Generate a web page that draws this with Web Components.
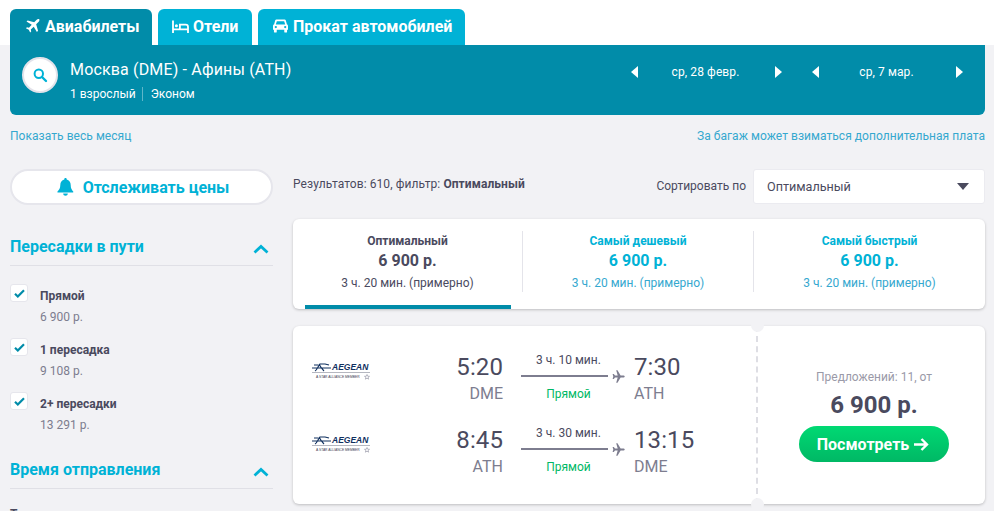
<!DOCTYPE html>
<html lang="ru">
<head>
<meta charset="utf-8">
<title>Авиабилеты</title>
<style>
  html, body { margin: 0; height: 511px; overflow: hidden; }
  body { background: #f2f2f5; font-family: Roboto, "Liberation Sans", sans-serif; color: #4a4a5e; }
  sr-page { display: block; }
</style>
</head>
<body>
<sr-page>
  <sr-tabs slot="tabs">
    <sr-tab active icon="plane">Авиабилеты</sr-tab>
    <sr-tab icon="bed">Отели</sr-tab>
    <sr-tab icon="car">Прокат автомобилей</sr-tab>
  </sr-tabs>
  <sr-search slot="search" route="Москва (DME) - Афины (ATH)">
    <sr-date>ср, 28 февр.</sr-date>
    <sr-date>ср, 7 мар.</sr-date>
  </sr-search>
  <sr-filters slot="side">
    <sr-track>Отслеживать цены</sr-track>
    <sr-group title="Пересадки в пути">
      <sr-check label="Прямой" price="6 900 р."></sr-check>
      <sr-check label="1 пересадка" price="9 108 р."></sr-check>
      <sr-check label="2+ пересадки" price="13 291 р."></sr-check>
    </sr-group>
    <sr-group title="Время отправления">
      <sr-cut>Туда</sr-cut>
    </sr-group>
  </sr-filters>
  <sr-results slot="main">
    <sr-sort></sr-sort>
    <sr-best>
      <sr-best-item active title="Оптимальный" price="6 900 р." time="3 ч. 20 мин. (примерно)"></sr-best-item>
      <sr-best-item title="Самый дешевый" price="6 900 р." time="3 ч. 20 мин. (примерно)"></sr-best-item>
      <sr-best-item title="Самый быстрый" price="6 900 р." time="3 ч. 20 мин. (примерно)"></sr-best-item>
    </sr-best>
    <sr-ticket offers="Предложений: 11, от" price="6 900 р.">
      <sr-leg dep="5:20" from="DME" arr="7:30" to="ATH" dur="3 ч. 10 мин."></sr-leg>
      <sr-leg dep="8:45" from="ATH" arr="13:15" to="DME" dur="3 ч. 30 мин."></sr-leg>
    </sr-ticket>
  </sr-results>
</sr-page>

<script>
const ICONS = {
  plane: '<svg width="15" height="15" viewBox="0 0 16 16"><path fill="#fff" d="M15.500.5c-.8-.8-2.200-.5-3 .3L9.800 3.500 2.800 1.500 1.600 2.700l5.600 3.400-3 3.100-2.100-.4L1 9.900l3 1.500 1.500 3 1.100-1.100-.4-2.100 3.100-3 3.400 5.600 1.200-1.200-2-7 2.700-2.700c.8-.8 1.100-2.200.4-2.900z"/></svg>',
  bed: '<svg width="17" height="13" viewBox="0 0 17 13"><path fill="none" stroke="#fff" stroke-width="1.800" d="M1 .5v12.500M1 9.300h15M16 13V7c0-1.400-.9-2.300-2.300-2.300H7.900v4.600"/><circle cx="4.400" cy="5.800" r="1.500" fill="#fff"/></svg>',
  car: '<svg width="15" height="14" viewBox="0 0 16 14"><path fill="#fff" fill-rule="evenodd" d="M3.600 0h8.800c.6 0 1 .4 1.200.9L14.800 5c.7.300 1.200 1 1.200 1.800V11h-1v2a1 1 0 0 1-1 1h-1a1 1 0 0 1-1-1v-2H4v2a1 1 0 0 1-1 1H2a1 1 0 0 1-1-1v-2H0V6.800C0 6 .5 5.300 1.200 5L2.400.9C2.600.4 3 0 3.600 0zm.5 1.800L3 5.400h10l-1.100-3.600zM3 6.900a1.200 1.200 0 1 0 0 2.400 1.200 1.200 0 0 0 0-2.400zm10 0a1.200 1.200 0 1 0 0 2.400 1.200 1.200 0 0 0 0-2.400z"/></svg>'
};

// small helper so every element below stays short
function define(name, css, render) {
  customElements.define(name, class extends HTMLElement {
    constructor() {
      super();
      this.attachShadow({ mode: 'open' });
    }
    connectedCallback() {
      this.shadowRoot.innerHTML = `<style>${css}</style>${render(this)}`;
    }
  });
}

define('sr-page', `
  :host { display: block; position: relative; }
  .top { height: 45px; background: #fff; padding: 9px 0 0 10px; box-sizing: border-box; }
  .wrap { padding: 0 9px 0 10px; }
  .links { display: flex; justify-content: space-between; font-size: 12px; line-height: 16px; color: #35a8cf; padding-top: 13px; letter-spacing: .05px; }
  .cols { display: flex; margin-top: 25px; }
  .side { width: 263px; flex: none; }
  .main { width: 692px; margin-left: 20px; flex: none; }
`, () => `
  <div class="top"><slot name="tabs"></slot></div>
  <div class="wrap">
    <slot name="search"></slot>
    <div class="links"><span>Показать весь месяц</span><span>За багаж может взиматься дополнительная плата</span></div>
    <div class="cols">
      <div class="side"><slot name="side"></slot></div>
      <div class="main"><slot name="main"></slot></div>
    </div>
  </div>`);

define('sr-tabs', `:host { display: flex; gap: 6px; height: 36px; }`, () => `<slot></slot>`);

define('sr-tab', `
  :host { display: flex; align-items: center; gap: 5px; height: 36px; padding: 0 0 2px 15px; background: #00b2d6; color: #fff; border-radius: 6px 6px 0 0; font-size: 16px; font-weight: 700; box-sizing: border-box; }
  :host([icon=plane]) { background: #018ca9; width: 142px; }
  :host([icon=bed]) { width: 94px; padding-left: 14px; gap: 4px; }
  :host([icon=car]) { width: 207px; }
  svg { display: block; flex: none; }
`, el => ICONS[el.getAttribute('icon')] + '<slot></slot>');

define('sr-search', `
  :host { display: flex; height: 70px; background: #018ca9; border-radius: 0 0 6px 6px; color: #fff; position: relative; box-sizing: border-box; }
  .btn { width: 36px; height: 36px; margin: 12px 0 0 12px; box-sizing: border-box; background: #fff; border: 2px solid #e3e3ea; border-radius: 50%; display: flex; align-items: center; justify-content: center; flex: none; }
  .txt { margin-left: 12px; }
  .route { font-size: 16px; line-height: 20px; margin-top: 15px; letter-spacing: .16px; }
  .meta { display: flex; align-items: center; font-size: 12px; line-height: 14px; margin-top: 7px; }
  .meta span + span { border-left: 1px solid #5fb6c9; margin-left: 6px; padding-left: 8px; }
  .dates { margin-left: auto; display: flex; gap: 30px; padding-top: 21px; margin-right: 22px; }
`, el => `
  <div class="btn"><svg width="16" height="16" viewBox="0 0 16 16"><circle cx="6.800" cy="6.800" r="4.200" fill="none" stroke="#00b2d6" stroke-width="2"/><path d="M10 10l4 4" stroke="#00b2d6" stroke-width="2.400" stroke-linecap="round"/></svg></div>
  <div class="txt"><div class="route">${el.getAttribute('route')}</div>
  <div class="meta"><span>1 взрослый</span><span>Эконом</span></div></div>
  <div class="dates"><slot></slot></div>`);

define('sr-date', `
  :host { display: flex; align-items: center; justify-content: space-between; width: 151px; height: 12px; font-size: 12px; letter-spacing: .1px; color: #fff; }
  span { margin-left: -2px; }
  i { display: block; width: 0; height: 0; border-top: 6px solid transparent; border-bottom: 6px solid transparent; }
  .l { border-right: 7px solid #fff; }
  .r { border-left: 7px solid #fff; }
`, () => `<i class="l"></i><span><slot></slot></span><i class="r"></i>`);

define('sr-filters', `:host { display: block; }`, () => `<slot></slot>`);

define('sr-track', `
  :host { display: flex; align-items: center; justify-content: center; gap: 9px; height: 36px; box-sizing: border-box; background: #fff; border: 2px solid #e6e6ec; border-radius: 18px; color: #00b2d6; font-size: 16px; font-weight: 700; padding-left: 3px; }
  svg { display: block; }
`, () => `<svg width="17" height="18" viewBox="0 0 17 18"><path fill="#00b2d6" d="M8.500 0c.7 0 1.200.5 1.200 1.200v.4c2.500.6 4 2.700 4 5.400 0 3.300 1 4.800 2.500 6.400.3.400.1 1-.5 1H1c-.6 0-.8-.6-.5-1C2 12 3.300 10.300 3.300 7c0-2.700 1.500-4.800 4-5.400v-.4C7.300.5 7.800 0 8.500 0zM6.200 15.500h4.600c0 1.300-1 2.300-2.300 2.300s-2.300-1-2.300-2.300z"/></svg><span><slot></slot></span>`);

define('sr-group', `
  :host { display: block; margin-top: 23px; }
  :host(:last-of-type) { margin-top: 5px; }
  .head { display: flex; justify-content: space-between; align-items: center; height: 37px; border-bottom: 1px solid #e0e0e6; padding-right: 4px; color: #00b2d6; font-size: 16px; font-weight: 700; }
  .body { display: block; padding-top: 18px; }
  svg { display: block; margin-top: 4px; }
`, el => `
  <div class="head"><span>${el.getAttribute('title')}</span><svg width="16" height="10" viewBox="0 0 16 10"><path d="M1.500 8.500L8 2.500l6.500 6" fill="none" stroke="#00b2d6" stroke-width="2.800"/></svg></div>
  <div class="body"><slot></slot></div>`);

define('sr-check', `
  :host { display: flex; height: 54px; }
  .box { width: 16px; height: 16px; background: #fff; border: 1px solid #e6e6ec; border-radius: 3px; display: flex; align-items: center; justify-content: center; flex: none; }
  .t { margin-left: 12px; padding-top: 5px; }
  .l { font-size: 12px; font-weight: 700; line-height: 14px; color: #4a4a5e; }
  .p { font-size: 12px; line-height: 14px; color: #7d7d8f; margin-top: 7px; }
`, el => `
  <div class="box"><svg width="11" height="9" viewBox="0 0 11 9"><path d="M1 4.800l2.800 2.700L10 1.300" fill="none" stroke="#018ca9" stroke-width="2.200"/></svg></div>
  <div class="t"><div class="l">${el.getAttribute('label')}</div><div class="p">${el.getAttribute('price')}</div></div>`);

define('sr-cut', `:host { display: block; font-size: 12px; font-weight: 700; line-height: 14px; color: #4a4a5e; }`, () => `<slot></slot>`);

define('sr-results', `:host { display: block; }`, () => `<slot></slot>`);

define('sr-sort', `
  :host { display: flex; align-items: flex-start; height: 35px; font-size: 12px; color: #4a4a5e; margin-bottom: 15px; }
  .res { line-height: 14px; padding-top: 8px; letter-spacing: .08px; }
  .lab { margin-left: auto; line-height: 35px; }
  .sel { width: 232px; height: 35px; margin-left: 7px; box-sizing: border-box; background: #fff; border: 1px solid #ebebf0; border-radius: 3px; display: flex; align-items: center; justify-content: space-between; padding: 0 15px 0 13px; font-size: 12.6px; }
  i { width: 0; height: 0; border-left: 6.500px solid transparent; border-right: 6.500px solid transparent; border-top: 7px solid #4a4a5e; }
`, () => `
  <div class="res">Результатов: 610, фильтр: <b>Оптимальный</b></div>
  <div class="lab">Сортировать по</div>
  <div class="sel"><span>Оптимальный</span><i></i></div>`);

define('sr-best', `
  :host { display: flex; height: 90px; background: #fff; border-radius: 6px; box-shadow: 0 1px 3px rgba(0,0,0,.22); padding: 12px 0 0; box-sizing: border-box; margin-bottom: 17px; }
`, () => `<slot></slot>`);

define('sr-best-item', `
  :host { display: block; flex: 1; height: 61px; text-align: center; color: #00b2d6; border-left: 1px solid #e4e4ea; position: relative; box-sizing: border-box; }
  :host(:first-child) { border-left: 0; flex: 0 0 229px; }
  :host(:nth-child(2)) { flex: 0 0 231px; }
  :host([active]) { color: #4a4a5e; }
  :host([active])::after { content: ""; position: absolute; left: 12px; top: 74px; width: 206px; height: 4px; background: #018ca9; }
  .a { font-size: 12px; font-weight: 700; line-height: 14px; margin-top: 3px; }
  .b { font-size: 16px; font-weight: 700; line-height: 20px; margin-top: 3px; }
  .c { font-size: 12px; line-height: 14px; margin-top: 5px; }
  :host(:not([active])) .c { color: #35a8cf; }
`, el => `
  <div class="a">${el.getAttribute('title')}</div>
  <div class="b">${el.getAttribute('price')}</div>
  <div class="c">${el.getAttribute('time')}</div>`);

define('sr-ticket', `
  :host { display: flex; height: 178px; background: #fff; border-radius: 6px; box-shadow: 0 1px 3px rgba(0,0,0,.22); position: relative; }
  .legs { width: 465px; padding-top: 26px; box-sizing: border-box; flex: none; border-right: 2px dashed #dedee4; }
  .buy { flex: 1; display: flex; flex-direction: column; align-items: center; padding: 44px 0 0 5px; box-sizing: border-box; }
  .of { font-size: 12px; line-height: 14px; color: #9a9aa8; }
  .pr { font-size: 24px; font-weight: 700; line-height: 28px; color: #4a4a5e; margin-top: 7px; }
  .go { width: 150px; height: 36px; margin-top: 7px; border-radius: 18px; background: linear-gradient(#00d973, #00b865); color: #fff; font-size: 16px; font-weight: 700; display: flex; align-items: center; justify-content: center; gap: 5px; padding-right: 2px; box-sizing: border-box; }
  .n { position: absolute; left: 458px; width: 13px; height: 13px; border-radius: 50%; background: #f2f2f5; }
  .n.t { top: -7px; } .n.b { bottom: -7px; }
`, el => `
  <div class="legs"><slot></slot></div>
  <div class="buy">
    <div class="of">${el.getAttribute('offers')}</div>
    <div class="pr">${el.getAttribute('price')}</div>
    <div class="go"><span>Посмотреть</span><svg width="15" height="13" viewBox="0 0 15 13"><path d="M0 6.500h12.500M7.500 1l5.500 5.500L7.500 12" fill="none" stroke="#fff" stroke-width="2.400"/></svg></div>
  </div>
  <i class="n t"></i><i class="n b"></i>`);

define('sr-logo', `
  :host { display: block; width: 58px; height: 20px; position: relative; color: #10305f; }
  .mark { position: absolute; left: 0; top: 0; }
  .name { position: absolute; left: 20px; top: 1px; font: italic 700 8.500px/9px "Liberation Sans", sans-serif; }
  .rule { position: absolute; left: 0; right: 0; top: 10px; height: 1px; background: #b5b7c0; }
  .tag { position: absolute; left: 4px; top: 13px; font: 3.300px/5px "Liberation Sans", sans-serif; color: #3c3c50; white-space: nowrap; }
  .star { position: absolute; left: 52px; top: 12px; }
`, () => `
  <svg class="mark" width="20" height="10" viewBox="0 0 20 10"><path d="M0 6h19M3 9c2-1 3-5 5-7h5l4 1M7 2c1 2 3 5 5 7M2 3h4" fill="none" stroke="#10305f" stroke-width="1.100"/></svg>
  <span class="name">AEGEAN</span><i class="rule"></i><span class="tag">A STAR ALLIANCE MEMBER</span>
  <svg class="star" width="6" height="6" viewBox="0 0 6 6"><path d="M3 .5l.7 1.700 1.800.1-1.400 1.100.5 1.800L3 4.200l-1.600 1 .5-1.800L.5 2.300l1.800-.1z" fill="none" stroke="#77778a" stroke-width=".5"/></svg>`);

define('sr-leg', `
  :host { display: flex; height: 73px; font-weight: 400; }
  sr-logo { margin: 10px 0 0 19px; }
  .p { width: 132px; text-align: right; flex: none; color: #4a4a5e; }
  .p:not(.q) { margin-left: 1px; }
  .tm { font-size: 24px; line-height: 28px; margin-top: 1px; letter-spacing: .1px; }
  .ap { font-size: 16px; line-height: 20px; color: #7d7d8f; margin-top: 3px; }
  .q { text-align: left; width: auto; margin-left: 9px; }
  .mid { width: 104px; margin-left: 18px; flex: none; text-align: center; font-size: 12px; line-height: 14px; }
  .d { color: #4a4a5e; margin-right: 9px; padding-top: 1px; }
  .line { display: flex; align-items: center; height: 14px; margin-top: 2px; }
  .line i { display: block; width: 87px; height: 2px; background: #7d7d8f; }
  .line svg { margin-left: 4px; }
  .st { color: #00b865; margin-top: 4px; margin-right: 9px; }
`, el => `
  <sr-logo></sr-logo>
  <div class="p"><div class="tm">${el.getAttribute('dep')}</div><div class="ap">${el.getAttribute('from')}</div></div>
  <div class="mid">
    <div class="d">${el.getAttribute('dur')}</div>
    <div class="line"><i></i><svg width="13" height="13" viewBox="0 0 13 13"><path fill="#7d7d8f" d="M12.700 6.500c0-.6-.8-1-1.500-1H8.600L5.500.3H4.200l1.500 5.200H3L1.800 4H.6l.7 2.500-.7 2.500h1.200L3 7.500h2.700l-1.500 5.200h1.300l3.100-5.200h2.600c.7 0 1.500-.4 1.500-1z"/></svg></div>
    <div class="st">Прямой</div>
  </div>
  <div class="p q"><div class="tm">${el.getAttribute('arr')}</div><div class="ap">${el.getAttribute('to')}</div></div>`);
</script>
</body>
</html>
